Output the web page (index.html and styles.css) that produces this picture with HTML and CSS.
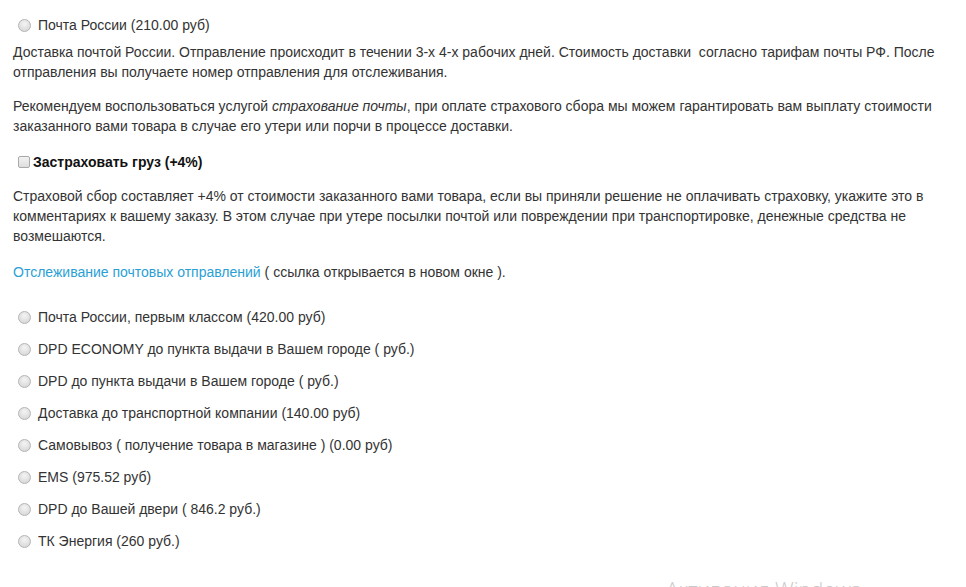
FILE: index.html
```html
<!DOCTYPE html>
<html lang="ru">
<head>
<meta charset="utf-8">
<title>Доставка</title>
<link rel="stylesheet" href="styles.css">
</head>
<body>
<div class="page">
  <label class="opt first"><input type="radio" name="ship" class="rb"><span>Почта России (210.00 руб)</span></label>
  <p class="p1">Доставка почтой России. Отправление происходит в течении 3-х 4-х рабочих дней. Стоимость доставки&nbsp; согласно тарифам почты РФ. После отправления вы получаете номер отправления для отслеживания.</p>
  <p class="p2">Рекомендуем воспользоваться услугой <em>страхование почты</em>, при оплате страхового сбора мы можем гарантировать вам выплату стоимости заказанного вами товара в случае его утери или порчи в процессе доставки.</p>
  <label class="ins"><input type="checkbox" class="cb"><b>Застраховать груз (+4%)</b></label>
  <p class="p3">Страховой сбор составляет +4% от стоимости заказанного вами товара, если вы приняли решение не оплачивать страховку, укажите это в комментариях к вашему заказу. В этом случае при утере посылки почтой или повреждении при транспортировке, денежные средства не возмешаются.</p>
  <p class="p4"><a href="#">Отслеживание почтовых отправлений</a> ( ссылка открывается в новом окне ).</p>
  <div class="list">
    <label class="opt"><input type="radio" name="ship" class="rb"><span>Почта России, первым классом (420.00 руб)</span></label>
    <label class="opt"><input type="radio" name="ship" class="rb"><span>DPD ECONOMY до пункта выдачи в Вашем городе ( руб.)</span></label>
    <label class="opt"><input type="radio" name="ship" class="rb"><span>DPD до пункта выдачи в Вашем городе ( руб.)</span></label>
    <label class="opt"><input type="radio" name="ship" class="rb"><span>Доставка до транспортной компании (140.00 руб)</span></label>
    <label class="opt"><input type="radio" name="ship" class="rb"><span>Самовывоз ( получение товара в магазине ) (0.00 руб)</span></label>
    <label class="opt"><input type="radio" name="ship" class="rb"><span>EMS (975.52 руб)</span></label>
    <label class="opt"><input type="radio" name="ship" class="rb"><span>DPD до Вашей двери ( 846.2 руб.)</span></label>
    <label class="opt"><input type="radio" name="ship" class="rb"><span>ТК Энергия (260 руб.)</span></label>
  </div>
</div>
<div class="watermark">Активация Windows</div>
</body>
</html>
```

FILE: styles.css
```css
html, body {
  margin: 0;
  padding: 0;
  background: #fff;
  overflow: hidden;
  height: 587px;
}
body {
  font-family: "Liberation Sans", Arial, sans-serif;
  font-size: 14px;
  line-height: 20px;
  color: #333;
  position: relative;
}
.page {
  padding: 15px 20px 0 13px;
  display: flex;
  flex-direction: column;
}
p {
  margin: 0;
}
.opt {
  display: flex;
  align-items: center;
  height: 20px;
  padding-left: 5px;
}
.rb {
  appearance: none;
  -webkit-appearance: none;
  width: 13px;
  height: 13px;
  margin: 0 7px 0 0;
  border-radius: 50%;
  border: 1px solid #b4b4b4;
  background: radial-gradient(circle at 50% 35%, #f4f4f4 0%, #dcdcdc 70%, #d0d0d0 100%);
  box-sizing: border-box;
  flex: none;
}
.p1 {
  margin-top: 7px;
}
.p2 {
  margin-top: 14px;
}
.ins {
  display: flex;
  align-items: center;
  height: 20px;
  margin-top: 16px;
  padding-left: 5px;
}
.cb {
  appearance: none;
  -webkit-appearance: none;
  width: 12px;
  height: 12px;
  margin: 0 3px 0 0;
  border-radius: 2px;
  border: 1px solid #a9a9a9;
  background: linear-gradient(#f2f2f2, #dedede);
  box-sizing: border-box;
  flex: none;
}
.ins b {
  font-weight: bold;
  color: #111;
}
.p3 {
  margin-top: 14px;
}
.p4 {
  margin-top: 16px;
}
a {
  color: #2a9fd6;
  text-decoration: none;
}
.list {
  margin-top: 25px;
  display: flex;
  flex-direction: column;
  gap: 12px;
}
.watermark {
  position: absolute;
  left: 666px;
  top: 575px;
  font-family: "Open Sans", "DejaVu Sans", sans-serif;
  font-weight: 300;
  font-size: 21px;
  line-height: 28px;
  color: #c9c9c9;
  white-space: nowrap;
}
```
